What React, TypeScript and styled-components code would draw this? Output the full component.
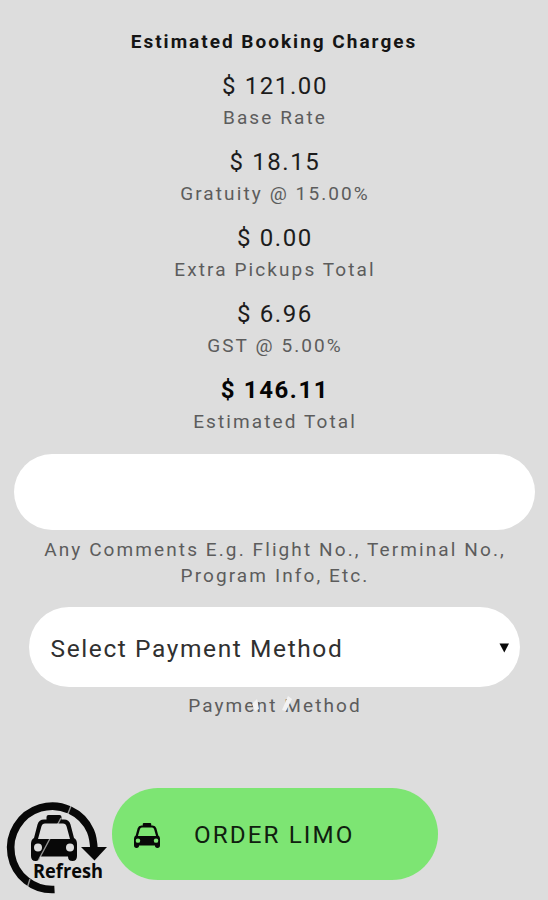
import React from 'react';
import styled, { createGlobalStyle } from 'styled-components';

const GlobalStyle = createGlobalStyle`
  * { box-sizing: border-box; }
  body { margin: 0; background: #dddddd; font-family: Roboto, sans-serif; }
`;

const Page = styled.main`
  display: flex;
  flex-direction: column;
  align-items: center;
  width: 548px;
  height: 900px;
  padding-top: 29px;
  overflow: hidden;
  background: #dddddd;
`;

const Title = styled.h1`
  margin: 0 0 9px;
  font-size: 19px;
  line-height: 26px;
  font-weight: 700;
  letter-spacing: 2px;
  color: #151515;
`;

const Charge = styled.div`
  display: flex;
  flex-direction: column;
  align-items: center;
  height: 76px;
`;

const Amount = styled.div<{ $bold?: boolean }>`
  margin-top: 5px;
  padding-left: 2px;
  height: 35px;
  font-size: 24px;
  line-height: 35px;
  font-weight: ${(p) => (p.$bold ? 700 : 400)};
  letter-spacing: 1.6px;
  color: ${(p) => (p.$bold ? '#050505' : '#1c1c1c')};
`;

const Label = styled.div<{ $gap?: number }>`
  margin-top: ${(p) => p.$gap ?? 0}px;
  padding-left: 2px;
  font-size: 19px;
  line-height: 26px;
  letter-spacing: 2.1px;
  text-align: center;
  color: #5c5c5c;
`;

const Comments = styled.input`
  width: 521px;
  height: 76px;
  margin-top: 10px;
  padding: 0 24px;
  border: 0;
  border-radius: 38px;
  background: #fff;
  font: 24px Roboto, sans-serif;
  outline: none;
`;

const Select = styled.button`
  display: flex;
  align-items: center;
  justify-content: space-between;
  width: 491px;
  height: 80px;
  margin-top: 18px;
  padding: 2px 10px 0 22px;
  border: 0;
  border-radius: 40px;
  background: #fff;
  font: 24.5px Roboto, sans-serif;
  letter-spacing: 1.6px;
  color: #303030;
`;

const Caption = styled.div`
  position: relative;
`;

const Glint = styled.svg`
  position: absolute;
  left: 60px;
  top: 2px;
`;

const Footer = styled.footer`
  display: flex;
  align-self: stretch;
  margin-top: 69px;
`;

const RefreshButton = styled.button`
  width: 112px;
  height: 112px;
  padding: 0;
  border: 0;
  background: none;
`;

const OrderButton = styled.button`
  display: flex;
  align-items: center;
  width: 326px;
  height: 92px;
  padding: 2px 0 0 22px;
  border: 0;
  border-radius: 46px;
  background: #7de573;
  font: 24.2px Roboto, sans-serif;
  letter-spacing: 2.1px;
  color: #10200f;
`;

const OrderText = styled.span`
  margin-left: 34px;
`;

const charges = [
  { amount: '$ 121.00', label: 'Base Rate' },
  { amount: '$ 18.15', label: 'Gratuity @ 15.00%' },
  { amount: '$ 0.00', label: 'Extra Pickups Total' },
  { amount: '$ 6.96', label: 'GST @ 5.00%' },
  { amount: '$ 146.11', label: 'Estimated Total', bold: true },
];

function TaxiPath({ cutout }: { cutout: string }) {
  return (
    <>
      <path
        d="M17.500 0h11q2 0 2 2v2.500h2.500q5 0 6.500 5L43 23q3 1.500 3 6v12q0 5-4.500 5T37 41.500H9Q9 46 4.500 46T0 41V29q0-4.500 3-6L6.500 9.500q1.500-5 6.500-5h2.500V2q0-2 2-2z"
        fill="#080808"
      />
      <path d="M14 8.500h18q2.800 0 3.600 3L39 24H7l3.400-12.500q.8-3 3.600-3z" fill={cutout} />
      <circle cx="7" cy="32.500" r="4" fill={cutout} />
      <circle cx="39" cy="32.500" r="4" fill={cutout} />
    </>
  );
}

function RefreshIcon() {
  return (
    <svg width="112" height="112" viewBox="0 788 112 112">
      <path
        d="M54.500 889.500 A41.700 41.700 0 1 1 90.500 831 Q93.500 838 94 850"
        fill="none"
        stroke="#080808"
        strokeWidth="7.600"
      />
      <path d="M81 847h26L94.500 860.500z" fill="#080808" />
      <g transform="translate(31 815)">
        <TaxiPath cutout="#dddddd" />
      </g>
      <path d="M71 806l-4 10M61 818L38 861M30 879l-6 19" stroke="#dddddd" strokeWidth="1.400" opacity=".65" />
      <text
        x="33"
        y="878"
        fontFamily="Open Sans, sans-serif"
        fontWeight="700"
        fontSize="19"
        textLength="70"
        lengthAdjust="spacingAndGlyphs"
        fill="#080808"
        stroke="#dddddd"
        strokeWidth="2"
        paintOrder="stroke"
      >
        Refresh
      </text>
    </svg>
  );
}

export default function App() {
  return (
    <>
      <GlobalStyle />
      <Page>
        <Title>Estimated Booking Charges</Title>
        {charges.map((c) => (
          <Charge key={c.label}>
            <Amount $bold={c.bold}>{c.amount}</Amount>
            <Label $gap={1}>{c.label}</Label>
          </Charge>
        ))}
        <Comments aria-label="Comments" />
        <Label $gap={7}>
          Any Comments E.g. Flight No., Terminal No.,
          <br />
          Program Info, Etc.
        </Label>
        <Select>
          Select Payment Method
          <svg width="11" height="10" viewBox="0 0 11 10">
            <path d="M.5.500h9.500L5.300 9.500z" fill="#080808" />
          </svg>
        </Select>
        <Caption>
          <Label $gap={6}>Payment Method</Label>
          <Glint width="50" height="26" viewBox="0 0 50 26">
            <path d="M6 15l5-5 2 10-4 2zM42 7l4 3-6 12-4-1z" fill="#f3f3f3" />
          </Glint>
        </Caption>
        <Footer>
          <RefreshButton aria-label="Refresh">
            <RefreshIcon />
          </RefreshButton>
          <OrderButton>
            <svg width="26" height="25" viewBox="0 0 46 46" preserveAspectRatio="none">
              <TaxiPath cutout="#7de573" />
            </svg>
            <OrderText>ORDER LIMO</OrderText>
          </OrderButton>
        </Footer>
      </Page>
    </>
  );
}
